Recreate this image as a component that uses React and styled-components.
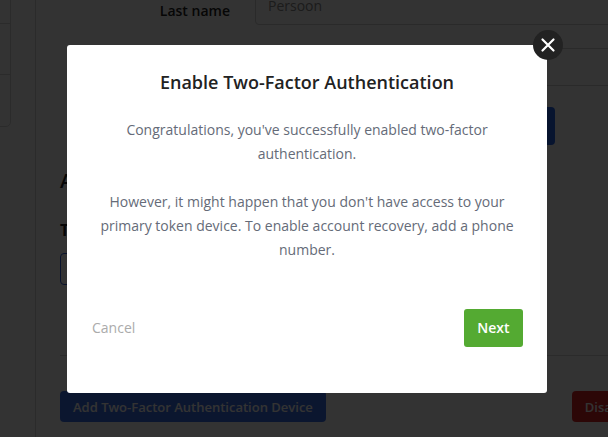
import React from 'react';
import styled, { createGlobalStyle } from 'styled-components';

const GlobalStyle = createGlobalStyle`
  html, body {
    margin: 0;
    padding: 0;
    background: #ffffff;
    overflow: hidden;
    font-family: "Open Sans", "Liberation Sans", sans-serif;
  }
  * { box-sizing: border-box; }
`;

const Page = styled.div`
  display: flex;
  width: 700px;
  height: 437px;
  overflow: hidden;
`;

const Sidebar = styled.aside`
  width: 36px;
  flex-shrink: 0;
  border-right: 1px solid #d8d8d8;
  overflow: hidden;
`;

const SideCard = styled.div`
  margin: -28px 0 0 -189px;
  width: 200px;
  border: 1px solid #d8d8d8;
  border-radius: 5px;
`;

const SideItem = styled.div`
  height: 51px;
  border-bottom: ${p => (p.last ? 'none' : '1px solid #d8d8d8')};
`;

const Main = styled.main`
  width: 632px;
  flex-shrink: 0;
  padding: 0 24px;
`;

const Form = styled.div`
  display: grid;
  grid-template-columns: 170px 1fr;
  column-gap: 25px;
  row-gap: 23px;
  margin-top: -13px;
`;

const Label = styled.label`
  text-align: right;
  font-size: 14px;
  font-weight: 600;
  line-height: 20px;
  color: #222;
  padding-top: 14px;
`;

const Input = styled.div`
  height: 38px;
  border: 1px solid #d0d0d0;
  border-radius: 4px;
  padding: 0 12px;
  font-size: 14px;
  line-height: 36px;
  color: #8a8a8a;
  width: 420px;
`;

const SaveButton = styled.button`
  grid-column: 2;
  width: 300px;
  height: 38px;
  margin-top: -2px;
  border: none;
  border-radius: 4px;
  background: #2563eb;
  color: #fff;
  font-family: inherit;
  font-size: 13px;
  font-weight: 600;
`;

const Heading = styled.h2`
  margin: 22px 0 0;
  font-size: 20px;
  line-height: 28px;
  font-weight: 600;
  color: #222;
`;

const SubHeading = styled.h3`
  margin: 23px 0 0;
  font-size: 16px;
  line-height: 24px;
  font-weight: 700;
  color: #222;
`;

const OutlineBox = styled.div`
  margin-top: 11px;
  width: 220px;
  height: 32px;
  border: 1px solid #2d5bd6;
  border-radius: 4px;
`;

const Rule = styled.hr`
  margin: 70px 0 0;
  border: none;
  border-top: 1px solid #d8d8d8;
`;

const ButtonRow = styled.div`
  display: flex;
  justify-content: space-between;
  margin-top: 35px;
`;

const ActionButton = styled.button`
  height: 31px;
  padding: 0 13px;
  border: none;
  border-radius: 4px;
  background: ${p => (p.danger ? '#dc2626' : '#3b6fe8')};
  color: #fff;
  font-family: inherit;
  font-size: 13px;
  font-weight: 600;
`;

const Overlay = styled.div`
  position: fixed;
  inset: 0;
  background: rgba(0, 0, 0, 0.8);
  display: flex;
  align-items: center;
  justify-content: center;
  padding-left: 6px;
`;

const Modal = styled.div`
  position: relative;
  width: 480px;
  background: #fff;
  border-radius: 3px;
  padding: 25px 0 46px;
  text-align: center;
`;

const CloseButton = styled.button`
  position: absolute;
  top: -15px;
  right: -16px;
  width: 30px;
  height: 30px;
  border-radius: 50%;
  border: none;
  padding: 0;
  background: #222;
  display: flex;
  align-items: center;
  justify-content: center;
`;

const Title = styled.h1`
  margin: 0;
  font-size: 18px;
  line-height: 24px;
  font-weight: 600;
  color: #222;
`;

const Body = styled.div`
  margin-top: 24px;
  padding: 0 28px;
  font-size: 14px;
  line-height: 24px;
  color: #656b78;
`;

const Para = styled.p`
  margin: 0 0 24px;
  &:last-child { margin-bottom: 0; }
`;

const Footer = styled.div`
  display: flex;
  justify-content: space-between;
  align-items: center;
  margin-top: 47px;
  padding: 0 24px 0 25px;
`;

const CancelLink = styled.button`
  border: none;
  background: none;
  padding: 0;
  font-family: inherit;
  font-size: 14px;
  color: #ababab;
`;

const NextButton = styled.button`
  height: 38px;
  padding: 0 13.5px;
  border: none;
  border-radius: 3px;
  background: #54aa32;
  color: #fff;
  font-family: inherit;
  font-size: 14px;
  font-weight: 600;
`;

const CloseIcon = () => (
  <svg width="24" height="24" viewBox="0 0 24 24" fill="none" stroke="#fff" strokeWidth="2.2" strokeLinecap="round">
    <path d="M6.5 6.5l11 11M17.5 6.5l-11 11" />
  </svg>
);

const App = () => (
  <>
    <GlobalStyle />
    <Page>
      <Sidebar>
        <SideCard>
          <SideItem />
          <SideItem />
          <SideItem last />
        </SideCard>
      </Sidebar>
      <Main>
        <Form>
          <Label>Last name</Label>
          <Input>Persoon</Input>
          <span />
          <Input />
          <SaveButton>Save</SaveButton>
        </Form>
        <Heading>Account security</Heading>
        <SubHeading>Two-Factor Authentication</SubHeading>
        <OutlineBox />
        <Rule />
        <ButtonRow>
          <ActionButton>Add Two-Factor Authentication Device</ActionButton>
          <ActionButton danger>Disable</ActionButton>
        </ButtonRow>
      </Main>
    </Page>
    <Overlay>
      <Modal>
        <CloseButton aria-label="Close">
          <CloseIcon />
        </CloseButton>
        <Title>Enable Two-Factor Authentication</Title>
        <Body>
          <Para>Congratulations, you've successfully enabled two-factor authentication.</Para>
          <Para>
            However, it might happen that you don't have access to your primary token device. To enable
            account recovery, add a phone number.
          </Para>
        </Body>
        <Footer>
          <CancelLink>Cancel</CancelLink>
          <NextButton>Next</NextButton>
        </Footer>
      </Modal>
    </Overlay>
  </>
);

export default App;
